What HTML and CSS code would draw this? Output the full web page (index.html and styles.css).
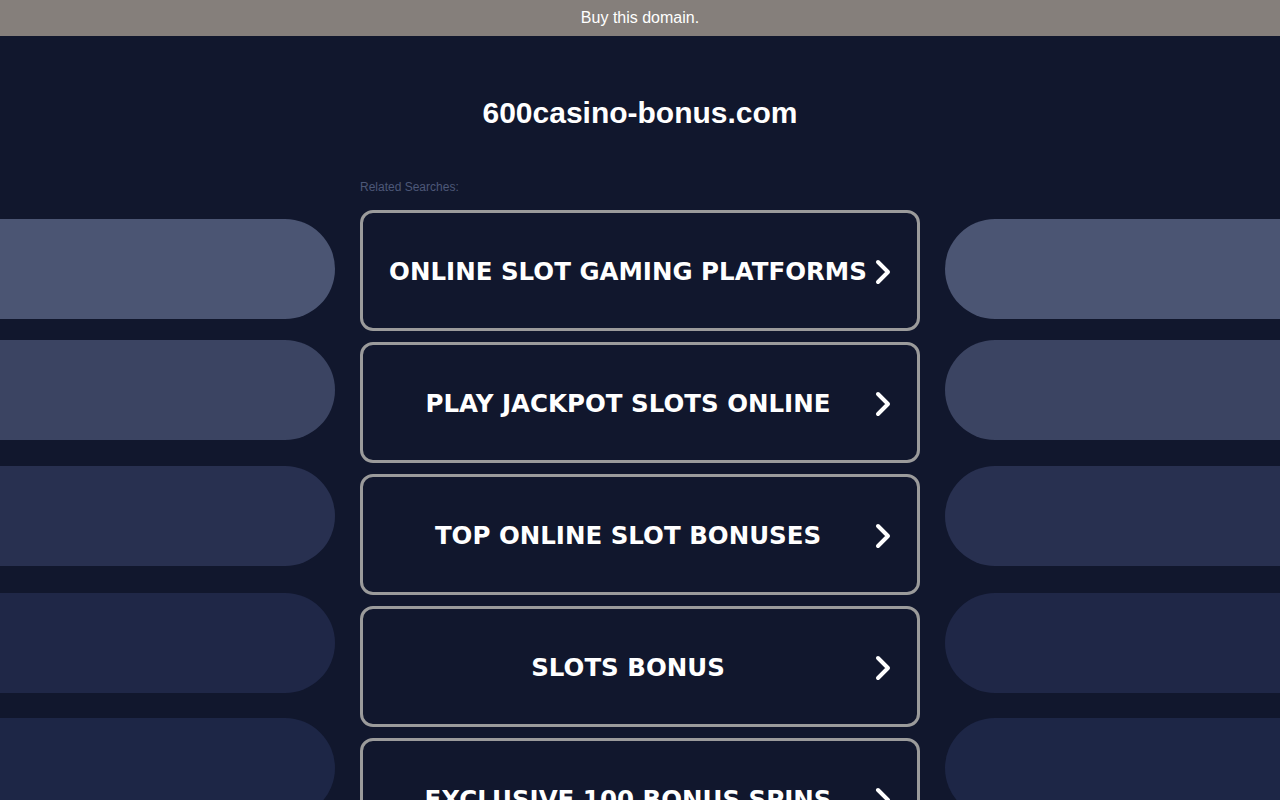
FILE: index.html
```html
<!DOCTYPE html>
<html lang="en">
<head>
<meta charset="utf-8">
<title>600casino-bonus.com</title>
<link rel="stylesheet" href="styles.css">
</head>
<body>
<div class="topbar"><a class="buy" href="#">Buy this domain.</a></div>
<h1 class="domain">600casino-bonus.com</h1>
<div class="layout">
  <div class="pills pills-left">
    <div class="pill p1"></div>
    <div class="pill p2"></div>
    <div class="pill p3"></div>
    <div class="pill p4"></div>
    <div class="pill p5"></div>
  </div>
  <div class="center">
    <div class="related">Related Searches:</div>
    <a class="link" href="#"><span class="label">ONLINE SLOT GAMING PLATFORMS</span><svg class="chev" viewBox="0 0 16 26" width="16" height="26"><polyline points="3,3 13,13 3,23"/></svg></a>
    <a class="link" href="#"><span class="label">PLAY JACKPOT SLOTS ONLINE</span><svg class="chev" viewBox="0 0 16 26" width="16" height="26"><polyline points="3,3 13,13 3,23"/></svg></a>
    <a class="link" href="#"><span class="label">TOP ONLINE SLOT BONUSES</span><svg class="chev" viewBox="0 0 16 26" width="16" height="26"><polyline points="3,3 13,13 3,23"/></svg></a>
    <a class="link" href="#"><span class="label">SLOTS BONUS</span><svg class="chev" viewBox="0 0 16 26" width="16" height="26"><polyline points="3,3 13,13 3,23"/></svg></a>
    <a class="link" href="#"><span class="label">EXCLUSIVE 100 BONUS SPINS</span><svg class="chev" viewBox="0 0 16 26" width="16" height="26"><polyline points="3,3 13,13 3,23"/></svg></a>
  </div>
  <div class="pills pills-right">
    <div class="pill p1"></div>
    <div class="pill p2"></div>
    <div class="pill p3"></div>
    <div class="pill p4"></div>
    <div class="pill p5"></div>
  </div>
</div>
</body>
</html>
```
FILE: styles.css
```css
html, body {
  margin: 0;
  padding: 0;
  height: 100%;
  overflow: hidden;
}
body {
  background: #11172d;
  font-family: "Liberation Sans", Arial, sans-serif;
  color: #fff;
}
.topbar {
  height: 36px;
  background: #857f7b;
  display: flex;
  align-items: center;
  justify-content: center;
}
.buy {
  color: #fff;
  text-decoration: none;
  font-size: 16px;
  line-height: 20px;
}
.domain {
  margin: 61px 0 0;
  font-size: 30px;
  line-height: 32px;
  font-weight: bold;
  text-align: center;
  color: #fff;
}
.layout {
  margin-top: 50px;
  display: grid;
  grid-template-columns: 1fr 560px 1fr;
  column-gap: 25px;
}
.pills {
  display: flex;
  flex-direction: column;
  padding-top: 40px;
}
.pill {
  height: 100px;
  flex: none;
}
.pills-left .pill { border-radius: 0 50px 50px 0; }
.pills-right .pill { border-radius: 50px 0 0 50px; }
.p1 { background: #4b5573; }
.p2 { background: #3b4462; margin-top: 21px; }
.p3 { background: #283050; margin-top: 26px; }
.p4 { background: #1f2747; margin-top: 27px; }
.p5 { background: #1d2646; margin-top: 25px; }
.related {
  font-size: 12px;
  line-height: 16px;
  color: #4d5878;
  margin-bottom: 15px;
}
.link {
  position: relative;
  display: flex;
  align-items: center;
  justify-content: center;
  box-sizing: border-box;
  height: 121px;
  margin-bottom: 11px;
  border: 3px solid #9b9b9b;
  border-radius: 13px;
  padding: 3px 24px 0 0;
  text-decoration: none;
  color: #fff;
}
.label {
  font-family: "DejaVu Sans", Verdana, sans-serif;
  font-weight: bold;
  font-size: 24.5px;
  line-height: 30px;
  white-space: nowrap;
}
.chev {
  position: absolute;
  right: 26px;
  top: 50%;
  margin-top: -12px;
}
.chev polyline {
  fill: none;
  stroke: #fff;
  stroke-width: 4;
  stroke-linecap: round;
  stroke-linejoin: round;
}
```
